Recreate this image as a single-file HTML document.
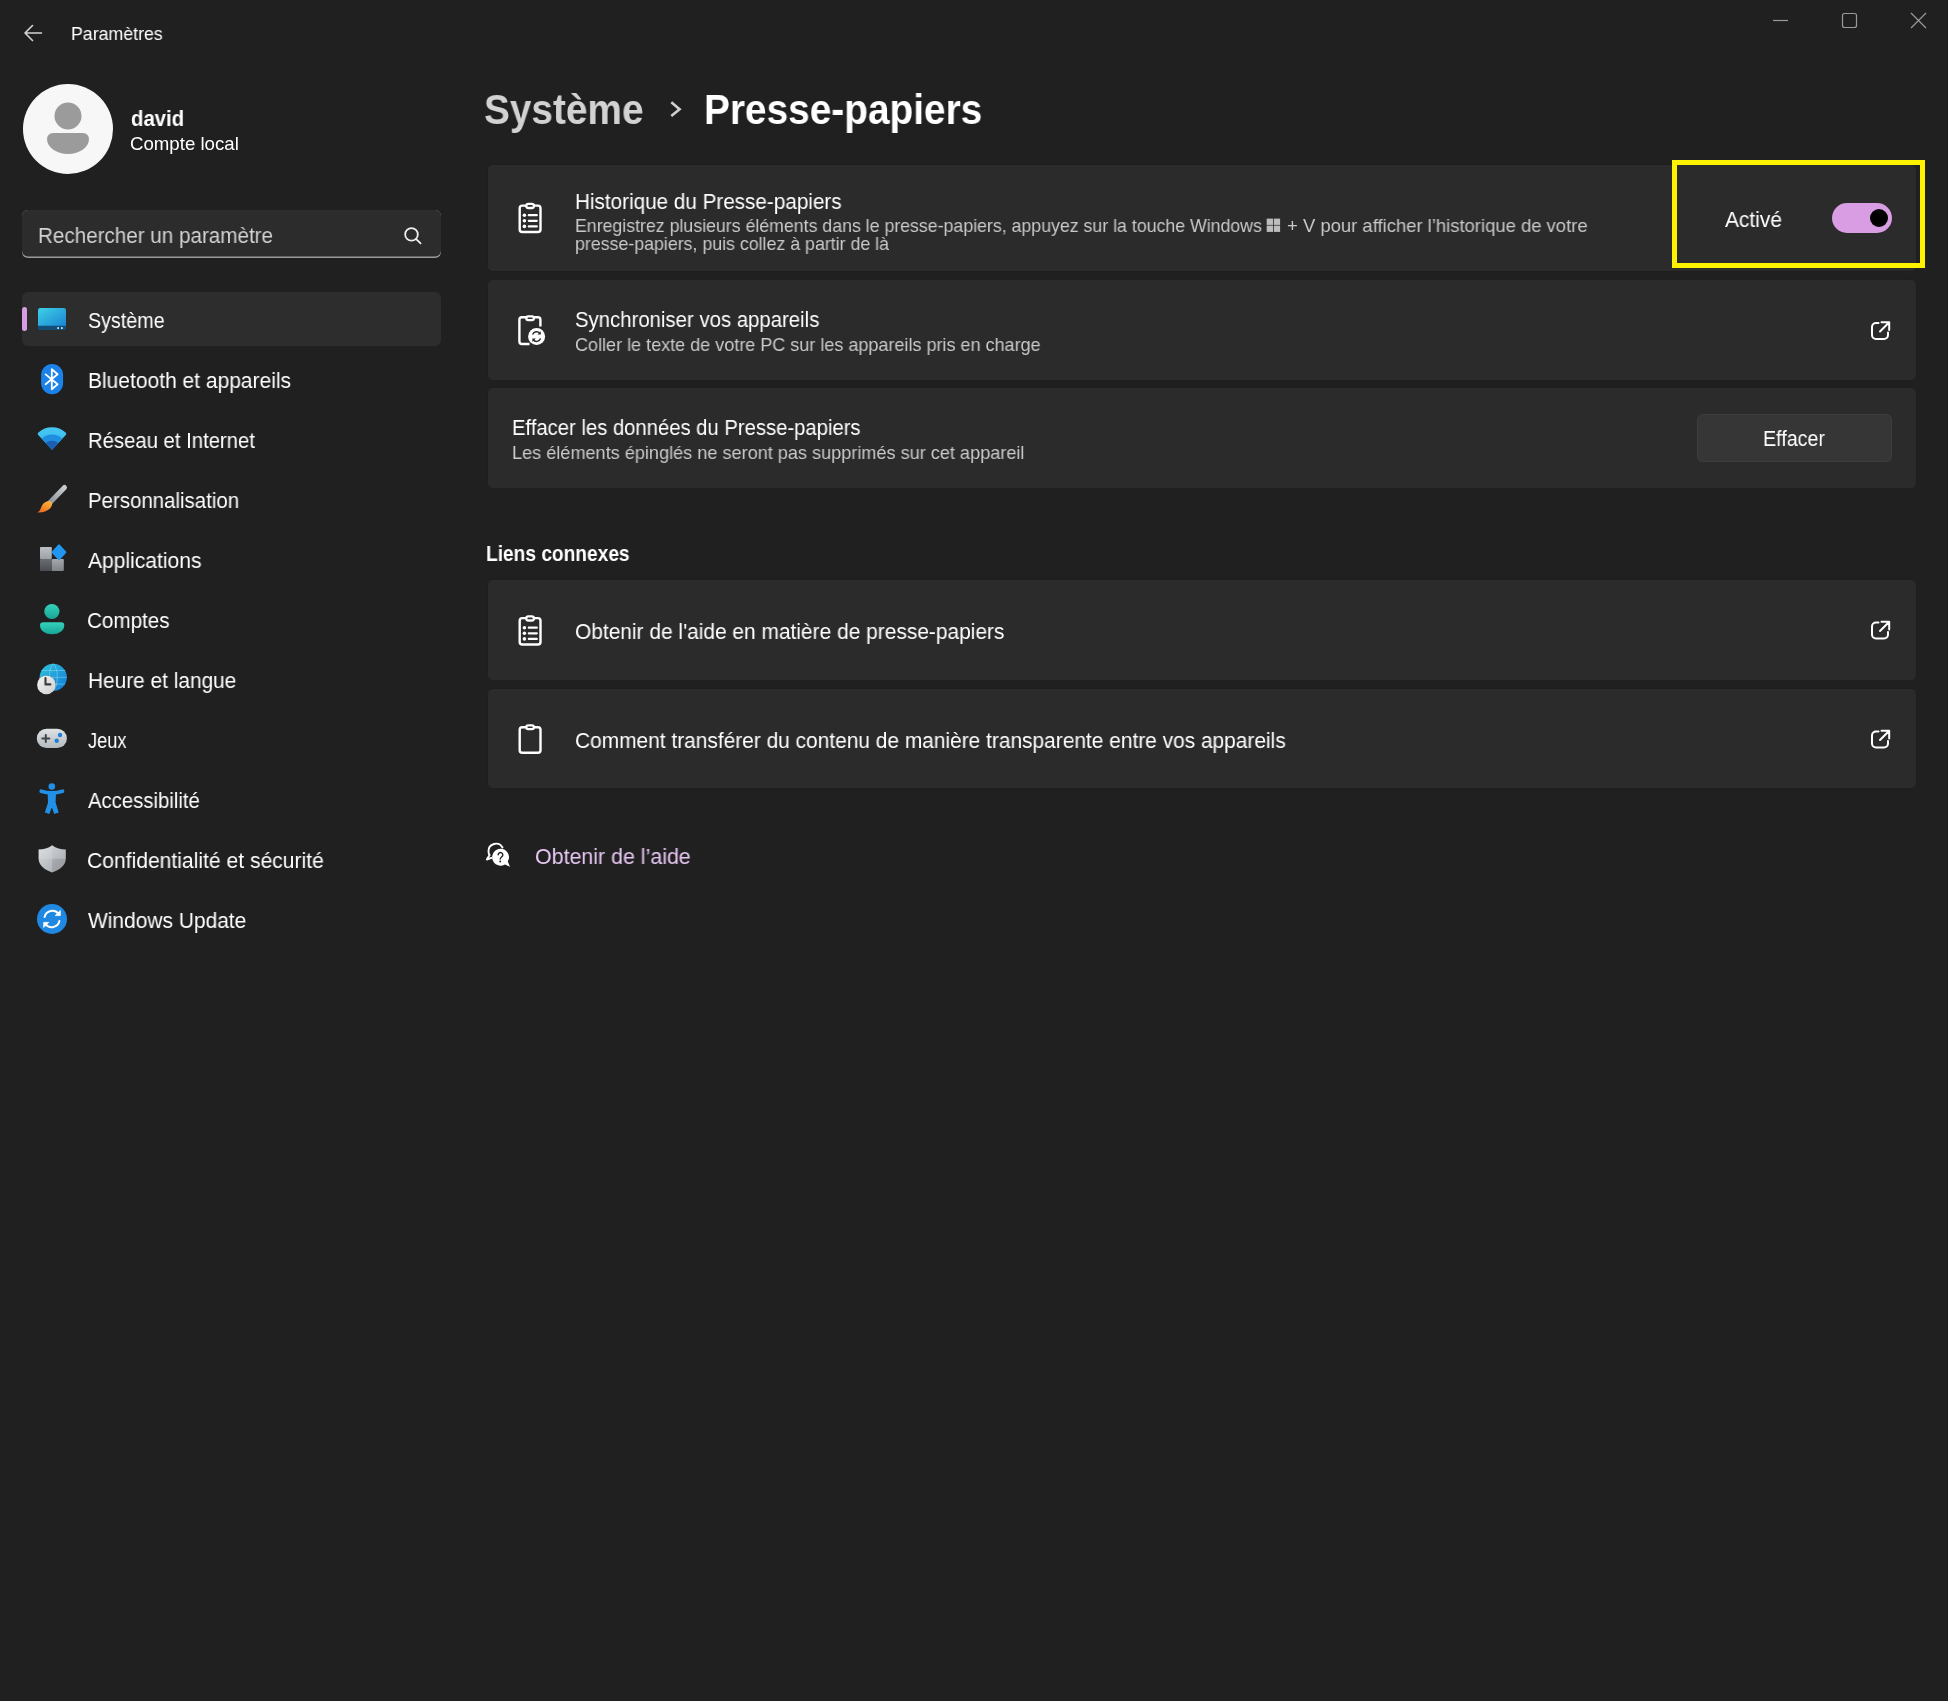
<!DOCTYPE html><html><head><meta charset="utf-8"><title>Paramètres</title><style>html,body{margin:0;padding:0;width:1948px;height:1701px;overflow:hidden;background:#202020;}body{position:relative;font-family:"Liberation Sans",sans-serif;}.abs{position:absolute;}.t{position:absolute;white-space:nowrap;transform-origin:0 0;will-change:transform;}</style></head><body><svg class="abs" width="1948" height="1701" style="left:0;top:0" viewBox="0 0 1948 1701"><g fill="none" stroke="#d4d4d4" stroke-width="1.6" stroke-linecap="round" stroke-linejoin="round"><path d="M41.5 33H25M32.5 25.5L25 33L32.5 40.5"/></g><g fill="none" stroke="#9a9a9a" stroke-width="1.2"><path d="M1773 20.5H1788"/><rect x="1842.5" y="13.5" width="14" height="14" rx="2"/><path d="M1911 13L1926 28M1926 13L1911 28"/></g><circle cx="68" cy="129" r="45" fill="#f7f7f7"/><circle cx="68" cy="116" r="13.5" fill="#9b9b9b"/><path d="M47 139a6 6 0 0 1 6-6h30a6 6 0 0 1 6 6c0 8-9 15-21 15s-21-7-21-15z" fill="#9b9b9b"/><rect x="22" y="210" width="419" height="48" rx="6" fill="#9a9a9a"/><rect x="22" y="210" width="419" height="46.4" rx="6" fill="#2c2c2c"/><g fill="none" stroke="#eeeeee" stroke-width="1.8" stroke-linecap="round"><circle cx="411.5" cy="234.4" r="6.3"/><path d="M416.2 239.1L420.6 243.4"/></g><rect x="22" y="292" width="419" height="54" rx="6" fill="#2d2d2d"/><rect x="22" y="307" width="5" height="24" rx="2.5" fill="#d99de3"/><path d="M671.3 102.3L679.6 109.2L671.3 116" fill="none" stroke="#d0d0d0" stroke-width="2.6" stroke-linecap="butt" stroke-linejoin="miter"/><rect x="487.5" y="164.5" width="1429" height="107" rx="5" fill="#1c1c1c"/><rect x="488" y="165" width="1428" height="106" rx="4.5" fill="#2b2b2b"/><rect x="487.5" y="279.5" width="1429" height="101" rx="5" fill="#1c1c1c"/><rect x="488" y="280" width="1428" height="100" rx="4.5" fill="#2b2b2b"/><rect x="487.5" y="387.5" width="1429" height="101" rx="5" fill="#1c1c1c"/><rect x="488" y="388" width="1428" height="100" rx="4.5" fill="#2b2b2b"/><rect x="487.5" y="579.5" width="1429" height="101" rx="5" fill="#1c1c1c"/><rect x="488" y="580" width="1428" height="100" rx="4.5" fill="#2b2b2b"/><rect x="487.5" y="688.5" width="1429" height="100" rx="5" fill="#1c1c1c"/><rect x="488" y="689" width="1428" height="99" rx="4.5" fill="#2b2b2b"/><rect x="1697" y="414" width="195" height="48" rx="6" fill="#3e3e3e"/><rect x="1698" y="415" width="193" height="46" rx="5" fill="#363636"/><rect x="1832" y="203" width="60" height="30" rx="15" fill="#d99de3"/><circle cx="1879" cy="218" r="9" fill="#000"/><rect x="1674.5" y="162.5" width="248" height="103" fill="none" stroke="#fff200" stroke-width="5"/></svg><svg class="abs" width="1948" height="1701" style="left:0;top:0" viewBox="0 0 1948 1701"><defs><linearGradient id="gSys" x1="0" y1="0" x2="1" y2="1"><stop offset="0" stop-color="#5fd0f0"/><stop offset="1" stop-color="#2298d8"/></linearGradient><linearGradient id="gBt" x1="0" y1="0" x2="0" y2="1"><stop offset="0" stop-color="#2f9ff5"/><stop offset="1" stop-color="#1779dc"/></linearGradient><linearGradient id="gBrush" x1="1" y1="0" x2="0" y2="1"><stop offset="0" stop-color="#d9dcdf"/><stop offset="1" stop-color="#6f757b"/></linearGradient><linearGradient id="gTip" x1="1" y1="0" x2="0" y2="1"><stop offset="0" stop-color="#ffb347"/><stop offset="1" stop-color="#f07a1a"/></linearGradient><linearGradient id="gGlobe" x1="0" y1="0" x2="1" y2="1"><stop offset="0" stop-color="#4dc7ee"/><stop offset="1" stop-color="#1a78d2"/></linearGradient><linearGradient id="gShield" x1="0" y1="0" x2="1" y2="0"><stop offset="0" stop-color="#d4d7da"/><stop offset="0.5" stop-color="#b8bcc0"/><stop offset="0.5" stop-color="#8f959b"/><stop offset="1" stop-color="#80868c"/></linearGradient><linearGradient id="gPad" x1="0" y1="0" x2="0" y2="1"><stop offset="0" stop-color="#dfe2e5"/><stop offset="1" stop-color="#b4b9be"/></linearGradient><linearGradient id="gWu" x1="0" y1="0" x2="1" y2="1"><stop offset="0" stop-color="#2a9cf0"/><stop offset="1" stop-color="#1673d4"/></linearGradient></defs><defs><linearGradient id="gSys2" x1="0" y1="0" x2="1" y2="1"><stop offset="0" stop-color="#3ed0e6"/><stop offset="1" stop-color="#1b86d2"/></linearGradient><linearGradient id="gWifi1" x1="0" y1="0" x2="0" y2="1"><stop offset="0" stop-color="#46c8f2"/><stop offset="1" stop-color="#36b2ea"/></linearGradient><linearGradient id="gTeal" x1="0" y1="0" x2="0" y2="1"><stop offset="0" stop-color="#35d3bb"/><stop offset="1" stop-color="#16a596"/></linearGradient><linearGradient id="gHandle" x1="1" y1="0" x2="0" y2="1"><stop offset="0" stop-color="#c8cbcf"/><stop offset="1" stop-color="#8e9399"/></linearGradient><linearGradient id="gTip2" x1="0.8" y1="0" x2="0.2" y2="1"><stop offset="0" stop-color="#fbb13c"/><stop offset="1" stop-color="#ee6a1e"/></linearGradient><linearGradient id="gSqL" x1="0" y1="0" x2="0" y2="1"><stop offset="0" stop-color="#bcc0c4"/><stop offset="1" stop-color="#9da2a7"/></linearGradient><linearGradient id="gSqD" x1="0" y1="0" x2="0" y2="1"><stop offset="0" stop-color="#6a6e73"/><stop offset="1" stop-color="#4a4e52"/></linearGradient><linearGradient id="gSqM" x1="0" y1="0" x2="0" y2="1"><stop offset="0" stop-color="#a5a9ae"/><stop offset="1" stop-color="#7f8489"/></linearGradient><linearGradient id="gGlobe2" x1="0" y1="0" x2="1" y2="1"><stop offset="0" stop-color="#2fc6dc"/><stop offset="1" stop-color="#1278d6"/></linearGradient><linearGradient id="gClock" x1="0" y1="0" x2="1" y2="1"><stop offset="0" stop-color="#f4f4f4"/><stop offset="1" stop-color="#cfcfcf"/></linearGradient><linearGradient id="gShield2" x1="0" y1="0" x2="1" y2="1"><stop offset="0" stop-color="#d9dcdf"/><stop offset="1" stop-color="#a2a6ab"/></linearGradient></defs><path d="M38 310.3a2.3 2.3 0 0 1 2.3-2.3H63.7a2.3 2.3 0 0 1 2.3 2.3V326H38Z" fill="url(#gSys2)"/><path d="M38 325.8H66V329a1 1 0 0 1-1 1H39a1 1 0 0 1-1-1z" fill="#124d78"/><rect x="57.3" y="327.2" width="1.7" height="1.7" fill="#d7f1ff"/><rect x="61" y="327.2" width="1.7" height="1.7" fill="#d7f1ff"/><rect x="41.1" y="364" width="22" height="30.2" rx="11" fill="#1a82e8"/><path d="M45.6 374.4L57.6 384.2L51.8 389.2V369.2L57.6 374.3L45.6 384.2" fill="none" stroke="#fff" stroke-width="1.8" stroke-linejoin="round" stroke-linecap="round"/><path d="M52 449.7L38.2 435.0A1.6 1.6 0 0 1 38.4 432.6A20.2 20.2 0 0 1 65.6 432.6A1.6 1.6 0 0 1 65.8 435.0Z" fill="url(#gWifi1)"/><path d="M52 449.7L41.7 438.6A15.1 15.1 0 0 1 62.3 438.6Z" fill="#1f8ee0"/><path d="M52 449.7L45.9 443.1A8.9 8.9 0 0 1 58.1 443.1Z" fill="#1a5fb4"/><path d="M64.5 487.5L49.5 503" stroke="url(#gHandle)" stroke-width="5" stroke-linecap="round"/><path d="M52.2 502.8c0.3 5.5-5.5 10-14.8 9.7c2.2-1.1 3-3 3.7-5c1.1-3.4 3.5-6 6.6-6.3c2.2-0.2 3.9 0.4 4.5 1.6z" fill="url(#gTip2)"/><rect x="40" y="547.1" width="11.8" height="12" rx="0.8" fill="url(#gSqL)"/><rect x="40" y="559" width="11.8" height="12" rx="0.8" fill="url(#gSqD)"/><rect x="51.8" y="559" width="12" height="12" rx="0.8" fill="url(#gSqM)"/><path d="M59 545.5L65.2 552.3L59 559.1L52.8 552.3Z" fill="#2196f0" stroke="#2196f0" stroke-width="2.2" stroke-linejoin="round"/><circle cx="51.9" cy="611.5" r="7.6" fill="url(#gTeal)"/><path d="M40 625.5a3.2 3.2 0 0 1 3.2-3.2h17.9a3.2 3.2 0 0 1 3.2 3.2c0 5-5.3 8.8-12.2 8.8s-12.1-3.8-12.1-8.8z" fill="url(#gTeal)"/><circle cx="53.3" cy="677.3" r="13.6" fill="url(#gGlobe2)"/><path d="M39.7 677.3H66.9M41.5 670.5H65.1M41.5 684.1H65.1M53.3 663.7C48 668 48 686.6 53.3 690.9M53.3 663.7C58.6 668 58.6 686.6 53.3 690.9" stroke="#8fdcf2" stroke-width="0.9" fill="none" opacity="0.55"/><circle cx="46.4" cy="684.9" r="9.6" fill="#1e1e1e" opacity="0.35"/><circle cx="46.4" cy="684.9" r="9.3" fill="url(#gClock)"/><path d="M45.5 678V684.4H50.4" fill="none" stroke="#3c3c3c" stroke-width="2.1" stroke-linecap="round" stroke-linejoin="round"/><rect x="36.8" y="728.7" width="30.1" height="19.4" rx="9.7" fill="url(#gPad)"/><path d="M42.3 738.5H49.3M45.8 735V742" stroke="#404448" stroke-width="2" stroke-linecap="round"/><circle cx="60" cy="735" r="2.2" fill="#1e7fd8"/><circle cx="56.7" cy="740.8" r="2.2" fill="#1e7fd8"/><circle cx="51.8" cy="786.5" r="3.3" fill="#2191e8"/><path d="M41.2 791.2Q51.8 794.6 62.5 791.2" fill="none" stroke="#2191e8" stroke-width="3.6" stroke-linecap="round"/><path d="M48.3 793.3H55.3L55 802.8L58 812.2L54.6 813.3L51.8 805.5L49 813.3L45.6 812.2L48.6 802.8Z" fill="#2191e8" stroke="#2191e8" stroke-width="1.2" stroke-linejoin="round"/><path d="M52.2 845.2C56 848.2 61 849.3 65.8 849.4V858.5C65.8 864.8 60.5 869.6 52.2 872.5C43.9 869.6 38.6 864.8 38.6 858.5V849.4C43.4 849.3 48.4 848.2 52.2 845.2Z" fill="url(#gShield2)"/><path d="M52.2 858.8H65.8C65.5 864.8 60.3 869.6 52.2 872.5Z" fill="#000" opacity="0.1"/><path d="M52.2 845.2V858.8H38.6V849.4C43.4 849.3 48.4 848.2 52.2 845.2Z" fill="#fff" opacity="0.12"/><circle cx="52" cy="919" r="15" fill="#1e88e2"/><path d="M44.6 917A8 8 0 0 1 58.6 913.8M59.4 921A8 8 0 0 1 45.4 924.2" fill="none" stroke="#fff" stroke-width="2" stroke-linecap="round"/><path d="M60.3 910.5V915.6H55.2Z M43.7 927.5V922.4H48.8Z" fill="#fff" stroke="#fff" stroke-width="0.8" stroke-linejoin="round"/><g transform="translate(0 0)"><rect x="519.7" y="205.6" width="20.8" height="26.4" rx="2.6" fill="none" stroke="#fff" stroke-width="2.4"/><rect x="526.3" y="203.9" width="7.6" height="4.1" rx="2" fill="#2b2b2b" stroke="#fff" stroke-width="2.3"/><circle cx="524.4" cy="215.2" r="1.8" fill="#fff"/><circle cx="524.4" cy="220.8" r="1.8" fill="#fff"/><circle cx="524.4" cy="226.4" r="1.8" fill="#fff"/><path d="M528.8 215.2H536.8M528.8 220.8H536.8M528.8 226.4H536.8" stroke="#fff" stroke-width="2.2" stroke-linecap="round"/></g><g transform="translate(0 412.5)"><rect x="519.7" y="205.6" width="20.8" height="26.4" rx="2.6" fill="none" stroke="#fff" stroke-width="2.4"/><rect x="526.3" y="203.9" width="7.6" height="4.1" rx="2" fill="#2b2b2b" stroke="#fff" stroke-width="2.3"/><circle cx="524.4" cy="215.2" r="1.8" fill="#fff"/><circle cx="524.4" cy="220.8" r="1.8" fill="#fff"/><circle cx="524.4" cy="226.4" r="1.8" fill="#fff"/><path d="M528.8 215.2H536.8M528.8 220.8H536.8M528.8 226.4H536.8" stroke="#fff" stroke-width="2.2" stroke-linecap="round"/></g><path d="M540.4 326.5V319.8a2.5 2.5 0 0 0-2.5-2.5H521.9a2.5 2.5 0 0 0-2.5 2.5V341.5a2.5 2.5 0 0 0 2.5 2.5H529.5" fill="none" stroke="#fff" stroke-width="2.4"/><rect x="526.3" y="316.3" width="7.6" height="3.8" rx="1.9" fill="#2b2b2b" stroke="#fff" stroke-width="2.3"/><circle cx="536.6" cy="336.6" r="8.5" fill="#fff"/><path d="M532.6 334.5A4.3 4.3 0 0 1 540 333.4M540.6 338.6A4.3 4.3 0 0 1 533.2 339.8" fill="none" stroke="#2b2b2b" stroke-width="1.4"/><path d="M540.8 331.2V334.6H537.4Z M532.4 342V338.6H535.8Z" fill="#2b2b2b"/><rect x="519.7" y="727.2" width="20.8" height="25.6" rx="2.6" fill="none" stroke="#fff" stroke-width="2.4"/><rect x="526.3" y="725.4" width="7.6" height="3.8" rx="1.9" fill="#2b2b2b" stroke="#fff" stroke-width="2.3"/><g transform="translate(0 0)" fill="none" stroke="#fff" stroke-width="2" stroke-linecap="round" stroke-linejoin="round"><path d="M1878.5 323H1876a4 4 0 0 0-4 4V335a4 4 0 0 0 4 4H1884a4 4 0 0 0 4-4V332.5"/><path d="M1880 331.5L1889 322.5M1881.5 322.3H1889.2V330"/></g><g transform="translate(0 299.5)" fill="none" stroke="#fff" stroke-width="2" stroke-linecap="round" stroke-linejoin="round"><path d="M1878.5 323H1876a4 4 0 0 0-4 4V335a4 4 0 0 0 4 4H1884a4 4 0 0 0 4-4V332.5"/><path d="M1880 331.5L1889 322.5M1881.5 322.3H1889.2V330"/></g><g transform="translate(0 408.5)" fill="none" stroke="#fff" stroke-width="2" stroke-linecap="round" stroke-linejoin="round"><path d="M1878.5 323H1876a4 4 0 0 0-4 4V335a4 4 0 0 0 4 4H1884a4 4 0 0 0 4-4V332.5"/><path d="M1880 331.5L1889 322.5M1881.5 322.3H1889.2V330"/></g><path d="M502.5 847.5A7.5 7.5 0 0 0 488.5 851.5c0 1.5.4 2.6 1.1 3.6L486.8 859.5L491.5 857.8" fill="none" stroke="#fff" stroke-width="1.9" stroke-linejoin="round" stroke-linecap="round"/><path d="M500.5 848.7a8.5 8.5 0 1 0 4.5 15.8L510 866.8L507.8 861.5A8.5 8.5 0 0 0 500.5 848.7Z" fill="#fff"/><path d="M498.2 854.8a2.3 2.3 0 1 1 3.6 1.9c-.8.6-1.6 1.2-1.6 2.4" fill="none" stroke="#202020" stroke-width="1.4" stroke-linecap="round"/><circle cx="500.2" cy="861.5" r="0.95" fill="#202020"/><g fill="#bdbdbd"><rect x="1266.7" y="218.6" width="6.3" height="6.3"/><rect x="1273.8" y="218.6" width="6.3" height="6.3"/><rect x="1266.7" y="225.6" width="6.3" height="6.3"/><rect x="1273.8" y="225.6" width="6.3" height="6.3"/></g></svg><div class="t" style="left:71.36px;top:20.40px;font-size:18.5px;line-height:28px;color:#fff;transform:scaleX(0.9598);">Paramètres</div><div class="t" style="left:130.59px;top:102.70px;font-size:21.5px;line-height:32px;font-weight:700;color:#fff;transform:scaleX(0.9463);">david</div><div class="t" style="left:130.19px;top:129.90px;font-size:18.5px;line-height:28px;color:#fff;transform:scaleX(1.0080);">Compte local</div><div class="t" style="left:37.92px;top:219.60px;font-size:21.5px;line-height:32px;color:#d2d2d2;transform:scaleX(0.9593);">Rechercher un paramètre</div><div class="t" style="left:87.58px;top:305.00px;font-size:21.5px;line-height:32px;color:#fff;transform:scaleX(0.9162);">Système</div><div class="t" style="left:87.89px;top:365.00px;font-size:21.5px;line-height:32px;color:#fff;transform:scaleX(0.9762);">Bluetooth et appareils</div><div class="t" style="left:87.95px;top:425.00px;font-size:21.5px;line-height:32px;color:#fff;transform:scaleX(0.9434);">Réseau et Internet</div><div class="t" style="left:87.94px;top:485.00px;font-size:21.5px;line-height:32px;color:#fff;transform:scaleX(0.9509);">Personnalisation</div><div class="t" style="left:88.30px;top:545.00px;font-size:21.5px;line-height:32px;color:#fff;transform:scaleX(0.9787);">Applications</div><div class="t" style="left:87.34px;top:605.00px;font-size:21.5px;line-height:32px;color:#fff;transform:scaleX(0.9602);">Comptes</div><div class="t" style="left:87.90px;top:665.00px;font-size:21.5px;line-height:32px;color:#fff;transform:scaleX(0.9691);">Heure et langue</div><div class="t" style="left:88.39px;top:725.00px;font-size:21.5px;line-height:32px;color:#fff;transform:scaleX(0.8467);">Jeux</div><div class="t" style="left:88.30px;top:785.00px;font-size:21.5px;line-height:32px;color:#fff;transform:scaleX(0.9458);">Accessibilité</div><div class="t" style="left:87.32px;top:845.00px;font-size:21.5px;line-height:32px;color:#fff;transform:scaleX(0.9808);">Confidentialité et sécurité</div><div class="t" style="left:88.30px;top:905.00px;font-size:21.5px;line-height:32px;color:#fff;transform:scaleX(0.9740);">Windows Update</div><div class="t" style="left:484.05px;top:77.80px;font-size:42px;line-height:63px;font-weight:700;color:#d2d2d2;transform:scaleX(0.9233);">Système</div><div class="t" style="left:704.36px;top:77.80px;font-size:42px;line-height:63px;font-weight:700;color:#fff;transform:scaleX(0.9240);">Presse-papiers</div><div class="t" style="left:575.12px;top:186.00px;font-size:21.5px;line-height:32px;color:#fff;transform:scaleX(0.9616);">Historique du Presse-papiers</div><div class="t" style="left:574.76px;top:212.20px;font-size:18.5px;line-height:28px;color:#c9c9c9;transform:scaleX(0.9584);">Enregistrez plusieurs éléments dans le presse-papiers, appuyez sur la touche Windows</div><div class="t" style="left:1287.10px;top:212.20px;font-size:18.5px;line-height:28px;color:#c9c9c9;transform:scaleX(0.9972);">+ V pour afficher l’historique de votre</div><div class="t" style="left:575.00px;top:230.20px;font-size:18.5px;line-height:28px;color:#c9c9c9;transform:scaleX(0.9602);">presse-papiers, puis collez à partir de là</div><div class="t" style="left:1725.00px;top:204.20px;font-size:21.5px;line-height:32px;color:#fff;transform:scaleX(0.9739);">Activé</div><div class="t" style="left:574.85px;top:303.60px;font-size:21.5px;line-height:32px;color:#fff;transform:scaleX(0.9466);">Synchroniser vos appareils</div><div class="t" style="left:575.23px;top:331.00px;font-size:18.5px;line-height:28px;color:#c9c9c9;transform:scaleX(0.9739);">Coller le texte de votre PC sur les appareils pris en charge</div><div class="t" style="left:512.25px;top:412.00px;font-size:21.5px;line-height:32px;color:#fff;transform:scaleX(0.9418);">Effacer les données du Presse-papiers</div><div class="t" style="left:511.73px;top:439.30px;font-size:18.5px;line-height:28px;color:#c9c9c9;transform:scaleX(0.9790);">Les éléments épinglés ne seront pas supprimés sur cet appareil</div><div class="t" style="left:1763.20px;top:423.00px;font-size:21.5px;line-height:32px;color:#fff;transform:scaleX(0.9160);">Effacer</div><div class="t" style="left:485.86px;top:538.00px;font-size:21.5px;line-height:32px;font-weight:700;color:#fff;transform:scaleX(0.8901);">Liens connexes</div><div class="t" style="left:574.93px;top:616.00px;font-size:21.5px;line-height:32px;color:#fff;transform:scaleX(0.9726);">Obtenir de l'aide en matière de presse-papiers</div><div class="t" style="left:574.93px;top:724.70px;font-size:21.5px;line-height:32px;color:#fff;transform:scaleX(0.9717);">Comment transférer du contenu de manière transparente entre vos appareils</div><div class="t" style="left:535.31px;top:841.40px;font-size:21.5px;line-height:32px;color:#e6c6f2;transform:scaleX(0.9948);">Obtenir de l’aide</div></body></html>
